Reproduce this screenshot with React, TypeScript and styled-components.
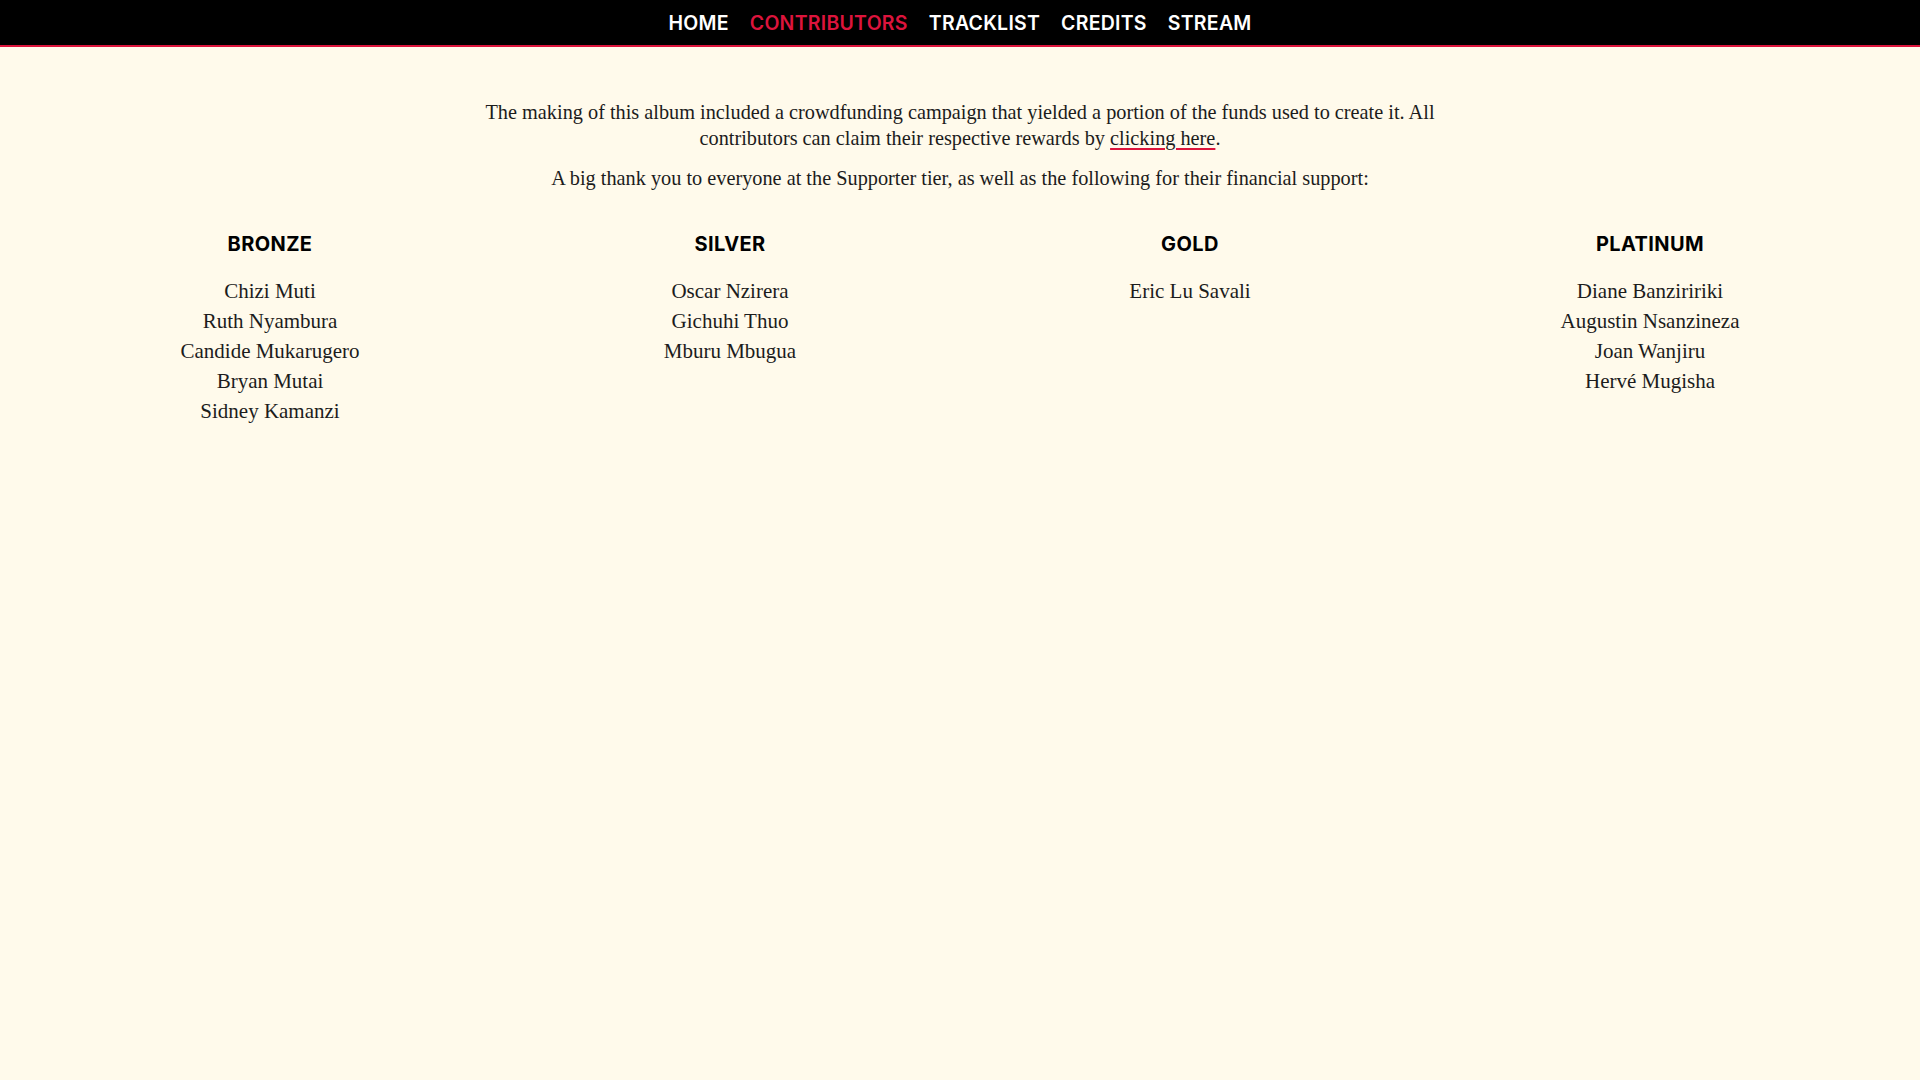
import React from "react";
import styled, { createGlobalStyle } from "styled-components";

const GlobalStyle = createGlobalStyle`
  html, body {
    margin: 0;
    padding: 0;
    background: #fffaeb;
  }
  body {
    font-family: "Liberation Serif", "Times New Roman", serif;
    color: #1c1c1c;
  }
`;

const Nav = styled.nav`
  height: 44px;
  background: #000;
  border-bottom: 2px solid #dc143c;
  display: flex;
  align-items: center;
  justify-content: center;
  gap: 21px;
  padding-top: 1px;
  box-sizing: content-box;
`;

const NavLink = styled.a<{ $active?: boolean }>`
  font-family: Inter, "Noto Sans", sans-serif;
  font-weight: 600;
  font-size: 19.5px;
  letter-spacing: 0.25px;
  text-decoration: none;
  color: ${(p) => (p.$active ? "#dc143c" : "#ffffff")};
  cursor: pointer;
`;

const Main = styled.main`
  padding: 52px 40px 40px;
`;

const Intro = styled.div`
  max-width: 980px;
  margin: 0 auto;
  text-align: center;
`;

const Para = styled.p`
  margin: 0 0 14px;
  font-size: 20.3px;
  line-height: 26px;
`;

const Link = styled.a`
  color: inherit;
  text-decoration: underline;
  text-decoration-color: #dc143c;
  text-underline-offset: 3px;
  cursor: pointer;
`;

const Tiers = styled.div`
  display: grid;
  grid-template-columns: repeat(4, 1fr);
  margin-top: 41px;
`;

const Tier = styled.section`
  text-align: center;
`;

const TierTitle = styled.h2`
  margin: 0 0 20px;
  font-family: Inter, "Noto Sans", sans-serif;
  font-weight: 700;
  font-size: 20px;
  line-height: 24px;
  color: #000;
  letter-spacing: 0.4px;
`;

const Names = styled.ul`
  list-style: none;
  margin: 0;
  padding: 0;
`;

const Name = styled.li`
  font-size: 21px;
  line-height: 30px;
`;

const tiers = [
  {
    title: "BRONZE",
    names: ["Chizi Muti", "Ruth Nyambura", "Candide Mukarugero", "Bryan Mutai", "Sidney Kamanzi"],
  },
  { title: "SILVER", names: ["Oscar Nzirera", "Gichuhi Thuo", "Mburu Mbugua"] },
  { title: "GOLD", names: ["Eric Lu Savali"] },
  {
    title: "PLATINUM",
    names: ["Diane Banziririki", "Augustin Nsanzineza", "Joan Wanjiru", "Hervé Mugisha"],
  },
];

export default function App() {
  return (
    <>
      <GlobalStyle />
      <Nav>
        <NavLink>HOME</NavLink>
        <NavLink $active>CONTRIBUTORS</NavLink>
        <NavLink>TRACKLIST</NavLink>
        <NavLink>CREDITS</NavLink>
        <NavLink>STREAM</NavLink>
      </Nav>
      <Main>
        <Intro>
          <Para>
            The making of this album included a crowdfunding campaign that yielded a portion of the funds used to
            create it. All contributors can claim their respective rewards by <Link>clicking here</Link>.
          </Para>
          <Para>
            A big thank you to everyone at the Supporter tier, as well as the following for their financial support:
          </Para>
        </Intro>
        <Tiers>
          {tiers.map((t) => (
            <Tier key={t.title}>
              <TierTitle>{t.title}</TierTitle>
              <Names>
                {t.names.map((n) => (
                  <Name key={n}>{n}</Name>
                ))}
              </Names>
            </Tier>
          ))}
        </Tiers>
      </Main>
    </>
  );
}
